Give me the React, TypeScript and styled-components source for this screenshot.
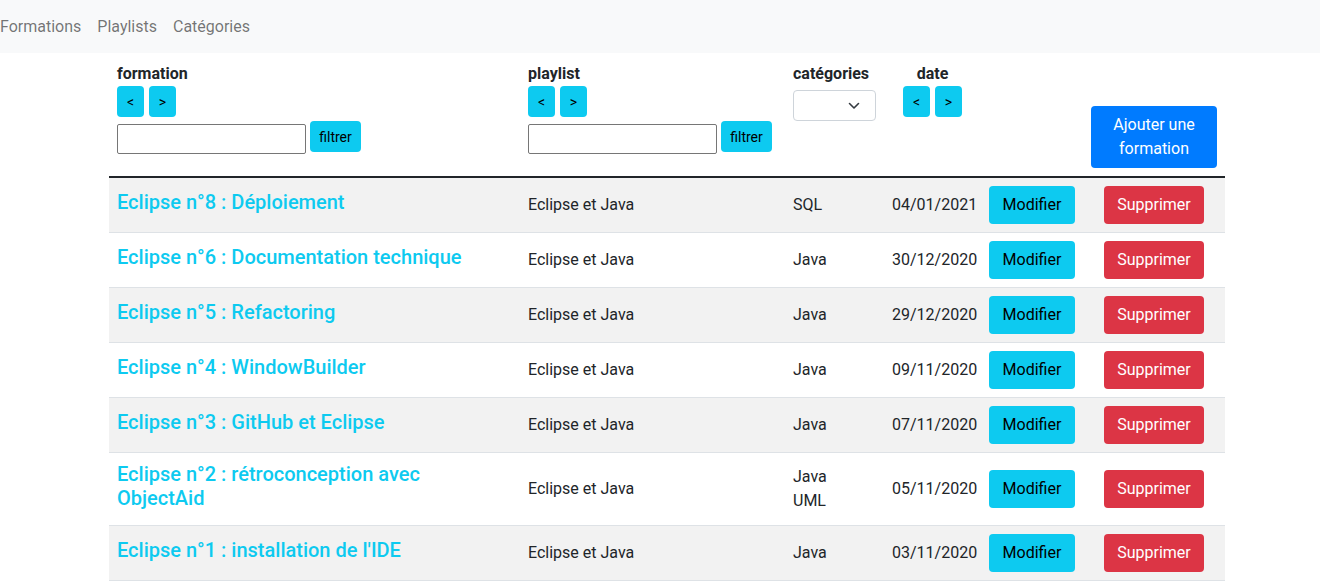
import styled, { createGlobalStyle } from "styled-components";

const GlobalStyle = createGlobalStyle`
  * {
    box-sizing: border-box;
  }

  body {
    margin: 0;
    font-family: Roboto, "Liberation Sans", sans-serif;
    font-size: 16px;
    line-height: 1.5;
    color: #212529;
    background: #fff;
  }
`;

const formations = [
  { title: "Eclipse n°8 : Déploiement", playlist: "Eclipse et Java", categories: ["SQL"], date: "04/01/2021" },
  { title: "Eclipse n°6 : Documentation technique", playlist: "Eclipse et Java", categories: ["Java"], date: "30/12/2020" },
  { title: "Eclipse n°5 : Refactoring", playlist: "Eclipse et Java", categories: ["Java"], date: "29/12/2020" },
  { title: "Eclipse n°4 : WindowBuilder", playlist: "Eclipse et Java", categories: ["Java"], date: "09/11/2020" },
  { title: "Eclipse n°3 : GitHub et Eclipse", playlist: "Eclipse et Java", categories: ["Java"], date: "07/11/2020" },
  { title: "Eclipse n°2 : rétroconception avec ObjectAid", playlist: "Eclipse et Java", categories: ["Java", "UML"], date: "05/11/2020" },
  { title: "Eclipse n°1 : installation de l'IDE", playlist: "Eclipse et Java", categories: ["Java"], date: "03/11/2020" },
];

const SortButtons = () => (
  <SortGroup>
    <SmallButton>&lt;</SmallButton>
    <SmallButton>&gt;</SmallButton>
  </SortGroup>
);

const FilterForm = () => (
  <FilterRow>
    <TextInput type="text" />
    <FilterButton>filtrer</FilterButton>
  </FilterRow>
);

const App = () => {
  return (
    <>
      <GlobalStyle />
      <Navbar>
        <NavLink>Formations</NavLink>
        <NavLink>Playlists</NavLink>
        <NavLink>Catégories</NavLink>
      </Navbar>
      <Container>
        <Table>
          <colgroup>
            <col style={{ width: 411 }} />
            <col style={{ width: 265 }} />
            <col style={{ width: 99 }} />
            <col style={{ width: 97 }} />
            <col style={{ width: 115 }} />
            <col style={{ width: 129 }} />
          </colgroup>
          <thead>
            <tr>
              <HeadCell>
                <Label>formation</Label>
                <SortButtons />
                <FilterForm />
              </HeadCell>
              <HeadCell>
                <Label>playlist</Label>
                <SortButtons />
                <FilterForm />
              </HeadCell>
              <HeadCell>
                <Label>catégories</Label>
                <SelectBox>
                  <svg width="12" height="8" viewBox="0 0 12 8">
                    <path d="M1.5 1.5 L6 6 L10.5 1.5" fill="none" stroke="#343a40" strokeWidth="1.6" strokeLinecap="round" strokeLinejoin="round" />
                  </svg>
                </SelectBox>
              </HeadCell>
              <HeadCell $center>
                <Label>date</Label>
                <SortButtons />
              </HeadCell>
              <HeadCell colSpan={2} $bottom $right>
                <AddButton>Ajouter une formation</AddButton>
              </HeadCell>
            </tr>
          </thead>
          <tbody>
            {formations.map((f, i) => (
              <Row key={f.title} $striped={i % 2 === 0}>
                <Cell>
                  <TitleLink>{f.title}</TitleLink>
                </Cell>
                <Cell>{f.playlist}</Cell>
                <Cell>
                  {f.categories.map((c) => (
                    <div key={c}>{c}</div>
                  ))}
                </Cell>
                <Cell>{f.date}</Cell>
                <Cell>
                  <ActionButton $variant="info">Modifier</ActionButton>
                </Cell>
                <Cell>
                  <ActionButton $variant="danger">Supprimer</ActionButton>
                </Cell>
              </Row>
            ))}
          </tbody>
        </Table>
      </Container>
    </>
  );
};

const Navbar = styled.nav`
  display: flex;
  align-items: center;
  height: 53px;
  background-color: #f8f9fa;
  padding: 0;
`;

const NavLink = styled.a`
  padding: 0 8px;
  color: rgba(0, 0, 0, 0.55);
  cursor: pointer;

  &:first-child {
    padding-left: 0;
  }
`;

const Container = styled.div`
  width: 1116px;
  margin-left: 109px;
`;

const Table = styled.table`
  width: 1116px;
  table-layout: fixed;
  border-collapse: collapse;
`;

const HeadCell = styled.th<{ $center?: boolean; $bottom?: boolean; $right?: boolean }>`
  padding: 9px 8px 8px;
  height: 124px;
  text-align: ${({ $center, $right }) => ($center ? "center" : $right ? "right" : "left")};
  vertical-align: ${({ $bottom }) => ($bottom ? "bottom" : "top")};
  border-bottom: 2px solid #212529;
`;

const Label = styled.div`
  font-weight: 700;
  line-height: 24px;
`;

const SortGroup = styled.div`
  display: inline-flex;
  gap: 5px;
`;

const SmallButton = styled.button`
  width: 27px;
  height: 31px;
  padding: 0;
  border: none;
  border-radius: 4px;
  background-color: #0dcaf0;
  color: #000;
  font-family: inherit;
  font-size: 14px;
  cursor: pointer;
`;

const FilterRow = styled.div`
  display: flex;
  align-items: flex-start;
  gap: 4px;
  margin-top: 4px;
`;

const TextInput = styled.input`
  width: 189px;
  height: 30px;
  margin-top: 3px;
  border: 1px solid #767676;
  border-radius: 2px;
`;

const FilterButton = styled.button`
  width: 51px;
  height: 31px;
  padding: 0;
  border: none;
  border-radius: 4px;
  background-color: #0dcaf0;
  color: #000;
  font-family: inherit;
  font-size: 14px;
  font-weight: 400;
`;

const SelectBox = styled.div`
  display: flex;
  align-items: center;
  justify-content: flex-end;
  width: 83px;
  height: 31px;
  margin-top: 4px;
  padding-right: 15px;
  border: 1px solid #ced4da;
  border-radius: 4px;
  background: #fff;
`;

const AddButton = styled.button`
  width: 126px;
  padding: 7px 12px;
  border: none;
  border-radius: 4px;
  background-color: #007bff;
  color: #fff;
  font-family: inherit;
  font-size: 16px;
  line-height: 24px;
`;

const Row = styled.tr<{ $striped: boolean }>`
  background-color: ${({ $striped }) => ($striped ? "#f2f2f2" : "#fff")};
  border-bottom: 1px solid #dee2e6;
`;

const Cell = styled.td`
  padding: 8px;
  vertical-align: middle;
`;

const TitleLink = styled.h5`
  margin: 0 0 7px;
  padding-top: 1px;
  font-size: 20px;
  font-weight: 500;
  line-height: 24px;
  color: #0dcaf0;
  cursor: pointer;
`;

const ActionButton = styled.button<{ $variant: "info" | "danger" }>`
  width: ${({ $variant }) => ($variant === "info" ? "86px" : "100px")};
  height: 38px;
  padding: 6px 0;
  border: none;
  border-radius: 4px;
  background-color: ${({ $variant }) => ($variant === "info" ? "#0dcaf0" : "#dc3545")};
  color: ${({ $variant }) => ($variant === "info" ? "#000" : "#fff")};
  font-family: inherit;
  font-size: 16px;
  line-height: 24px;
`;

export default App;
